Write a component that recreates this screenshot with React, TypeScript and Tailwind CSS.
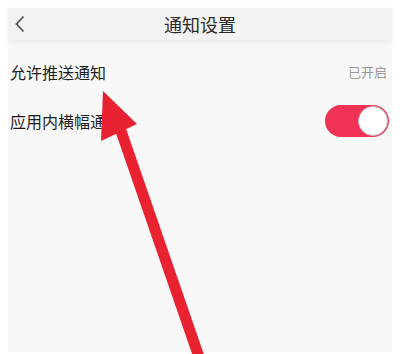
import React from "react";

export default function App() {
  return (
    <div
      className="relative w-[400px] h-[354px] bg-white overflow-hidden"
      style={{ fontFamily: '"Noto Sans CJK SC", "Noto Sans", sans-serif' }}
    >
      <div className="mx-[8px] mt-[8px] h-[344px] bg-[#f8f8f8] flex flex-col">
        <div className="relative h-[32px] bg-[#f2f2f2] shadow-[0_2px_6px_rgba(0,0,0,0.06)] flex items-center justify-center">
          <svg className="absolute left-[6px] top-[7px]" width="12" height="18" viewBox="0 0 12 18">
            <path d="M9.5 1.5 L2.5 9 L9.5 16.5" fill="none" stroke="#555" strokeWidth="1.8" />
          </svg>
          <span className="text-[18px] text-[#2a2a2a] leading-none">通知设置</span>
        </div>
        <div className="h-[48px] mt-[8px] flex items-center justify-between pl-[2px] pr-[5px]">
          <span className="text-[16px] text-[#1e1e1e]">允许推送通知</span>
          <span className="text-[13px] text-[#999]">已开启</span>
        </div>
        <div className="h-[50px] flex items-center justify-between pl-[2px] pr-[3px]">
          <span className="text-[16px] text-[#1e1e1e]">应用内横幅通知</span>
          <div className="relative w-[64px] h-[32px] rounded-full bg-[#f03355]">
            <div className="absolute right-[1px] top-[1px] w-[30px] h-[30px] rounded-full bg-white border border-[#bbb]" />
          </div>
        </div>
      </div>
      <svg className="absolute left-0 top-0" width="400" height="354" viewBox="0 0 400 354">
        <line x1="120" y1="128" x2="200" y2="360" stroke="#e82230" strokeWidth="11" />
        <polygon points="103,91 101,141 137,124" fill="#e82230" />
      </svg>
    </div>
  );
}
